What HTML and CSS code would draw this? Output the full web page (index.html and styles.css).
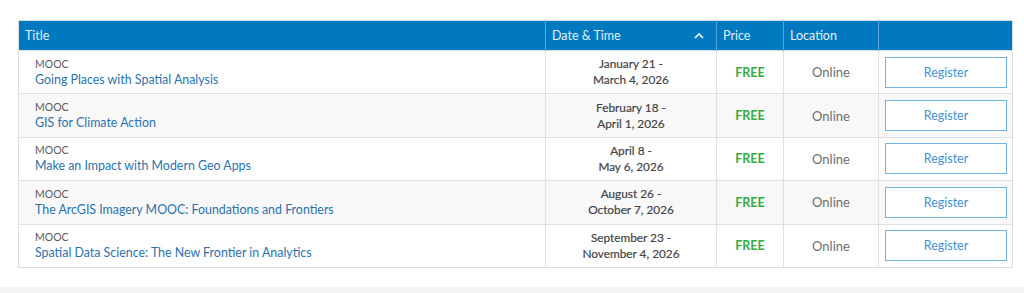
FILE: index.html
```html
<!DOCTYPE html>
<html>
<head>
<meta charset="utf-8">
<link rel="stylesheet" href="styles.css">
</head>
<body>
<div class="wrap">
<table class="events">
  <thead>
    <tr>
      <th class="c-title">Title</th>
      <th class="c-date"><span class="th-flex">Date &amp; Time<svg class="chev" width="10" height="6" viewBox="0 0 10 6"><path d="M1 5 L5 1 L9 5" fill="none" stroke="#fff" stroke-width="1.6"/></svg></span></th>
      <th class="c-price">Price</th>
      <th class="c-loc">Location</th>
      <th class="c-reg"></th>
    </tr>
  </thead>
  <tbody>
    <tr>
      <td class="c-title"><div class="type">MOOC</div><a class="name">Going Places with Spatial Analysis</a></td>
      <td class="c-date">January 21 -<br>March 4, 2026</td>
      <td class="c-price">FREE</td>
      <td class="c-loc">Online</td>
      <td class="c-reg"><button class="btn">Register</button></td>
    </tr>
    <tr class="alt">
      <td class="c-title"><div class="type">MOOC</div><a class="name">GIS for Climate Action</a></td>
      <td class="c-date">February 18 -<br>April 1, 2026</td>
      <td class="c-price">FREE</td>
      <td class="c-loc">Online</td>
      <td class="c-reg"><button class="btn">Register</button></td>
    </tr>
    <tr>
      <td class="c-title"><div class="type">MOOC</div><a class="name">Make an Impact with Modern Geo Apps</a></td>
      <td class="c-date">April 8 -<br>May 6, 2026</td>
      <td class="c-price">FREE</td>
      <td class="c-loc">Online</td>
      <td class="c-reg"><button class="btn">Register</button></td>
    </tr>
    <tr class="alt">
      <td class="c-title"><div class="type">MOOC</div><a class="name">The ArcGIS Imagery MOOC: Foundations and Frontiers</a></td>
      <td class="c-date">August 26 -<br>October 7, 2026</td>
      <td class="c-price">FREE</td>
      <td class="c-loc">Online</td>
      <td class="c-reg"><button class="btn">Register</button></td>
    </tr>
    <tr>
      <td class="c-title"><div class="type">MOOC</div><a class="name">Spatial Data Science: The New Frontier in Analytics</a></td>
      <td class="c-date">September 23 -<br>November 4, 2026</td>
      <td class="c-price">FREE</td>
      <td class="c-loc">Online</td>
      <td class="c-reg"><button class="btn">Register</button></td>
    </tr>
  </tbody>
</table>
</div>
<div class="footer-band"></div>
</body>
</html>
```

FILE: styles.css
```css
* { box-sizing: border-box; }
html, body { margin: 0; padding: 0; background: #fff; }
body { font-family: Lato, "Open Sans", "Noto Sans", sans-serif; color: #4c4c4c; }
.wrap { padding: 20px 12px 0 18px; height: 287px; }
.events {
  width: 994px;
  border-collapse: collapse;
  table-layout: fixed;
  border: 1px solid #dcdcdc;
  font-size: 13px;
}
.events th {
  background: #0079c1;
  color: #e2eff8;
  font-weight: 400;
  text-align: left;
  height: 30px;
  padding: 0 6px;
  border-left: 1px solid #5aa6d6;
  font-size: 12.5px;
}
.events th:first-child { border-left: none; }
.th-flex { display: flex; justify-content: space-between; align-items: center; padding-right: 6px; }
.chev { display: block; }
.c-title { width: 527px; }
.c-date { width: 171px; }
.c-price { width: 67px; }
.c-loc { width: 95px; }
.c-reg { width: 134px; }
.events td {
  height: 43.4px;
  border-top: 1px solid #e0e0e0;
  border-left: 1px solid #e0e0e0;
  padding: 0 6px;
  vertical-align: middle;
}
.events td:first-child { border-left: none; padding-left: 16px; }
.events tr.alt td { background: #f8f8f8; }
.type { font-size: 10.5px; color: #595959; line-height: 14px; }
.name { display: block; color: #2b72ad; font-size: 12.4px; line-height: 16px; margin-top: 1px; }
td.c-date { text-align: center; font-size: 11.8px; line-height: 16px; font-weight: 400; color: #454545; -webkit-text-stroke: 0.2px #454545; }
td.c-price { text-align: center; color: #35ac46; font-weight: 700; font-size: 12.5px; }
td.c-loc { text-align: center; color: #6e6e6e; font-size: 13px; }
td.c-reg { padding: 0 6px; }
.btn {
  display: block;
  width: 122px;
  height: 31px;
  margin: 0;
  background: #fff;
  border: 1px solid #6fb3e0;
  color: #3f93cf;
  font-family: inherit;
  font-size: 12.5px;
  cursor: pointer;
}
.footer-band { height: 6px; background: #f4f4f4; }
```
